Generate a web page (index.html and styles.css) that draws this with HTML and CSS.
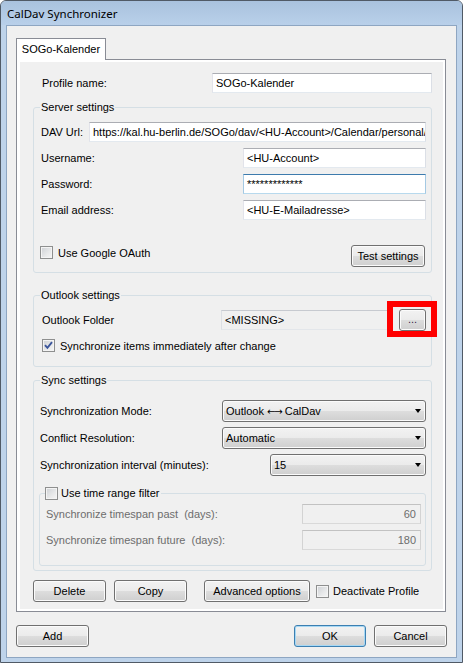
FILE: index.html
```html
<!DOCTYPE html>
<html>
<head>
<meta charset="utf-8">
<title>CalDav Synchronizer</title>
<link rel="stylesheet" href="styles.css">
</head>
<body>
<div class="window">
  <div class="titlebar"><span class="title">CalDav Synchronizer</span></div>
  <div class="client">
    <div class="tabs">
      <div class="tabstrip"><div class="tab">SOGo-Kalender</div></div>
      <div class="panel">
        <div class="page">
          <div class="row profile-row">
            <span class="lbl">Profile name:</span>
            <span class="tb w-profile">SOGo-Kalender</span>
          </div>

          <fieldset class="group server">
            <legend>Server settings</legend>
            <div class="rows">
              <div class="row"><span class="lbl">DAV Url:</span><span class="tb w-url">https://kal.hu-berlin.de/SOGo/dav/&lt;HU-Account&gt;/Calendar/personal/</span></div>
              <div class="row"><span class="lbl">Username:</span><span class="tb w-cred">&lt;HU-Account&gt;</span></div>
              <div class="row"><span class="lbl">Password:</span><span class="tb w-cred focused">*************</span></div>
              <div class="row"><span class="lbl">Email address:</span><span class="tb w-cred">&lt;HU-E-Mailadresse&gt;</span></div>
            </div>
            <div class="server-bottom">
              <label class="check oauth"><span class="cb"></span><span>Use Google OAuth</span></label>
              <span class="btn w-test">Test settings</span>
            </div>
          </fieldset>

          <fieldset class="group outlook">
            <legend>Outlook settings</legend>
            <div class="row folder-row">
              <span class="lbl">Outlook Folder</span>
              <span class="tb readonly w-folder">&lt;MISSING&gt;</span>
              <span class="browse-wrap"><span class="btn w-browse">...</span><span class="highlight"></span></span>
            </div>
            <label class="check immediate"><span class="cb checked"><svg width="11" height="11" viewBox="0 0 11 11"><path d="M2 5.2 L4.4 7.8 L9 2.2" fill="none" stroke="#3b559b" stroke-width="1.9"/></svg></span><span>Synchronize items immediately after change</span></label>
          </fieldset>

          <fieldset class="group sync">
            <legend>Sync settings</legend>
            <div class="sync-rows">
              <div class="row combo-row"><span class="lbl">Synchronization Mode:</span><span class="combo w-mode"><span class="combo-text">Outlook <span class="arrows">←→</span> CalDav</span><span class="arrow"></span></span></div>
              <div class="row combo-row"><span class="lbl">Conflict Resolution:</span><span class="combo w-mode"><span class="combo-text">Automatic</span><span class="arrow"></span></span></div>
              <div class="row combo-row"><span class="lbl">Synchronization interval (minutes):</span><span class="combo w-interval"><span class="combo-text">15</span><span class="arrow"></span></span></div>
            </div>
            <fieldset class="group timerange">
              <legend><span class="cb"></span><span class="legend-text">Use time range filter</span></legend>
              <div class="rows">
                <div class="row"><span class="lbl disabled">Synchronize timespan past&nbsp; (days):</span><span class="tb disabled-tb w-days">60</span></div>
                <div class="row"><span class="lbl disabled">Synchronize timespan future&nbsp; (days):</span><span class="tb disabled-tb w-days">180</span></div>
              </div>
            </fieldset>
          </fieldset>

          <div class="page-buttons">
            <span class="btn w-delete">Delete</span>
            <span class="btn w-copy">Copy</span>
            <span class="btn w-adv">Advanced options</span>
            <label class="check deactivate"><span class="cb"></span><span>Deactivate Profile</span></label>
          </div>
        </div>
      </div>
    </div>

    <div class="footer">
      <span class="btn w-add">Add</span>
      <span class="btn default w-ok">OK</span>
      <span class="btn w-cancel">Cancel</span>
    </div>
  </div>
</div>
</body>
</html>
```

FILE: styles.css
```css
* { box-sizing: border-box; }
html, body { margin: 0; padding: 0; }
body {
  width: 463px;
  height: 663px;
  overflow: hidden;
  background: #ffffff;
  font-family: "Liberation Sans", Arial, sans-serif;
  font-size: 11px;
  color: #000000;
}

.window {
  width: 463px;
  height: 663px;
  border: 1px solid #505a66;
  border-radius: 6px 6px 0 0;
  background: #bed3ea;
  padding: 0 5px 4px 5px;
  display: flex;
  flex-direction: column;
}

.titlebar {
  height: 24px;
  margin: 0 -5px;
  padding-left: 6px;
  display: flex;
  align-items: center;
  border-radius: 5px 5px 0 0;
  background: linear-gradient(#a9c2de, #b9d0ea);
}
.title {
  font-family: "Noto Sans", "Open Sans", sans-serif;
  font-size: 11.5px;
  color: #000;
  padding-top: 1px;
}

.client {
  flex: 1;
  border: 1px solid #8ea6c2;
  background: #f0f0f0;
  padding: 12px 9px 0 9px;
  display: flex;
  flex-direction: column;
}

/* Tabs */
.tabs { width: 430px; }
.tabstrip { display: flex; height: 21px; }
.tab {
  position: relative;
  z-index: 1;
  width: 90px;
  height: 22px;
  border: 1px solid #898c95;
  border-bottom: none;
  background: #ffffff;
  display: flex;
  align-items: center;
  justify-content: center;
  padding-bottom: 1px;
}
.panel {
  width: 430px;
  height: 553px;
  border: 1px solid #898c95;
  background: #ffffff;
  padding: 2px 2px 2px 3px;
}
.page {
  height: 547px;
  background: #f0f0f0;
  padding: 11px 11px 7px 13px;
  display: flex;
  flex-direction: column;
}

/* Generic rows */
.row {
  display: flex;
  align-items: center;
  height: 20px;
  white-space: nowrap;
}
.lbl { white-space: nowrap; }
.lbl.disabled { color: #6d6d6d; }
.profile-row .lbl { padding-left: 9px; }

.rows { display: flex; flex-direction: column; gap: 6px; }

/* Text boxes */
.tb {
  display: block;
  height: 20px;
  margin-left: auto;
  border: 1px solid;
  border-color: #abadb3 #dbdfe6 #e3e9ef #e2e3ea;
  background: #ffffff;
  padding: 0 3px;
  line-height: 18px;
  white-space: nowrap;
  overflow: hidden;
}
.tb.focused { border-color: #3d7bad #a4c9e3 #b7d9ed #a4c9e3; }
.tb.readonly { background: #f0f0f0; border-color: #c7cad0 #dcdfe4 #e3e6ea #dcdfe4; }
.tb.disabled-tb {
  background: #f0f0f0;
  border-color: #c2c2c2 #d3d3d3 #d9d9d9 #d3d3d3;
  color: #6d6d6d;
  text-align: right;
  padding-right: 4px;
}
.w-profile { width: 220px; }
.w-url { width: 337px; }
.w-cred { width: 183px; }
.w-folder { width: 172px; }
.w-days { width: 119px; }

/* Group boxes */
.group {
  margin: 0;
  min-width: 0;
  border: 1px solid #d5dfe5;
  border-radius: 3px;
}
.group > legend {
  padding: 0 1px;
  line-height: 13px;
  height: 13px;
  color: #000;
}

.server { margin-top: 8px; padding: 8px 5px 5px 7px; }
.server > legend { margin-left: -1px; }
.server-bottom {
  display: flex;
  justify-content: space-between;
  align-items: flex-start;
  margin-top: 25px;
  height: 22px;
}
.oauth { margin-top: 1px; margin-left: -1px; }
.w-test { width: 74px; margin-right: 1px; }

.outlook { margin-top: 16px; padding: 7px 5px 14px 8px; }
.outlook > legend { margin-left: -2px; }
.folder-row { height: 22px; }
.browse-wrap { position: relative; display: block; margin-left: 6px; }
.w-browse { width: 27px; padding-bottom: 2px; color: #3a1a4a; }
.highlight {
  position: absolute;
  left: -12px;
  top: -8px;
  width: 50px;
  height: 36px;
  border: 6px solid #ff0000;
}
.immediate { margin-top: 8px; }

.sync { margin-top: 7px; padding: 13px 5px 4px 5px; }
.sync > legend { margin-left: 1px; }
.sync-rows { display: flex; flex-direction: column; gap: 5px; }
.combo-row { height: 22px; }
.combo-row .lbl { padding-left: 1px; }
.w-mode { width: 204px; }
.w-interval { width: 156px; }
.arrows {
  font-family: "DejaVu Sans", sans-serif;
  font-size: 10px;
  letter-spacing: -1px;
}

.timerange { margin-top: 11px; padding: 4px 4px 15px 6px; }
.timerange > legend {
  margin-left: -1px;
  padding: 0 2px 0 0;
  display: flex;
  align-items: center;
}
.legend-text { margin-left: 3px; }

/* Combo boxes */
.combo {
  display: flex;
  align-items: center;
  height: 22px;
  margin-left: auto;
  border: 1px solid #707070;
  border-radius: 3px;
  background: linear-gradient(#f2f2f2 0%, #ebebeb 50%, #dddddd 51%, #cfcfcf 100%);
  box-shadow: inset 0 0 0 1px #fbfbfb;
  padding-left: 3px;
}
.combo-text { flex: 1; white-space: nowrap; }
.arrow {
  width: 0;
  height: 0;
  margin-right: 4px;
  border-left: 3.5px solid transparent;
  border-right: 3.5px solid transparent;
  border-top: 4px solid #000;
}

/* Checkboxes */
.check { display: flex; align-items: center; white-space: nowrap; }
.check .cb { margin-right: 5px; }
.cb {
  display: flex;
  align-items: center;
  justify-content: center;
  width: 13px;
  height: 13px;
  flex: none;
  border: 1px solid #8e8f8f;
  background: linear-gradient(135deg, #cdd0d4 0%, #e8e9ea 60%, #f6f6f6 100%);
  box-shadow: inset 0 0 0 1px #f4f4f4;
}
.cb svg { display: block; }

/* Buttons */
.btn {
  display: flex;
  align-items: center;
  justify-content: center;
  height: 22px;
  flex: none;
  border: 1px solid #707070;
  border-radius: 3px;
  background: linear-gradient(#f2f2f2 0%, #ebebeb 50%, #dddddd 51%, #cfcfcf 100%);
  box-shadow: inset 0 0 0 1px #fbfbfb;
  white-space: nowrap;
}
.btn.default {
  border-color: #3c7fb1;
  box-shadow: inset 0 0 0 1px #a7d8f4;
}

.page-buttons {
  display: flex;
  align-items: center;
  margin-top: 9px;
  height: 22px;
}
.w-delete { width: 73px; }
.w-copy { width: 73px; margin-left: 8px; }
.w-adv { width: 106px; margin-left: 17px; }
.deactivate { margin-left: 6px; }
.deactivate .cb { margin-right: 4px; }

.footer {
  display: flex;
  align-items: center;
  margin-top: 13px;
  height: 22px;
}
.w-add { width: 73px; }
.w-ok { width: 72px; margin-left: auto; }
.w-cancel { width: 73px; margin-left: 8px; }
```
